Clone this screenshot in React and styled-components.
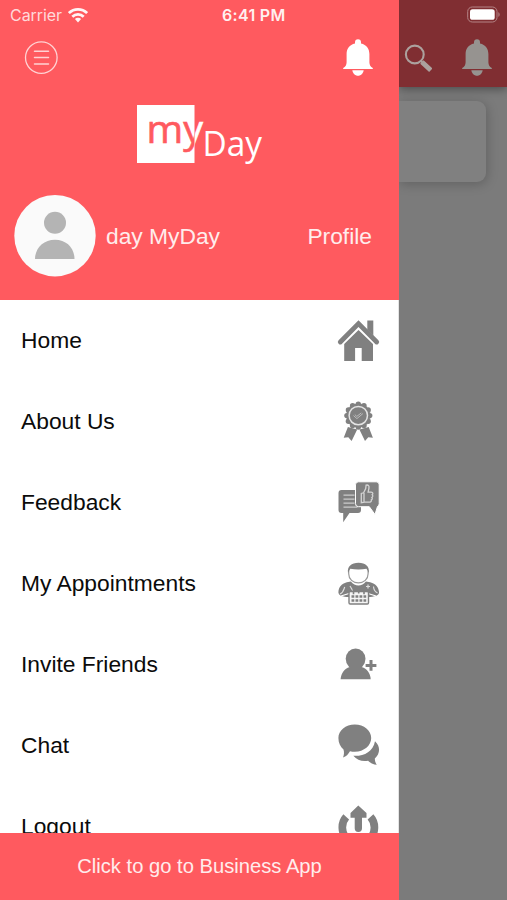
import React from "react";
import styled, { createGlobalStyle } from "styled-components";

const CORAL = "#ff5a5f";
const GREY = "#808080";

const GlobalStyle = createGlobalStyle`
  * { box-sizing: border-box; }
  body { margin: 0; font-family: "Liberation Sans", Arial, sans-serif; }
`;

const Screen = styled.div`
  display: flex;
  width: 507px;
  height: 900px;
  overflow: hidden;
  background: #7b7b7b;
`;

const Drawer = styled.aside`
  display: flex;
  flex-direction: column;
  width: 399px;
  height: 100%;
  background: #fff;
`;

const DrawerHeader = styled.header`
  display: flex;
  flex-direction: column;
  height: 300px;
  background: ${CORAL};
  color: #ffecec;
`;

const StatusBar = styled.div`
  display: grid;
  grid-template-columns: 58px 154px auto;
  align-items: center;
  height: 30px;
  padding-left: 10px;
  font-family: Inter, sans-serif;
  font-size: 16px;
  line-height: 30px;
  color: #ffd9da;
`;

const Carrier = styled.span`
  letter-spacing: -0.05px;
`;

const Time = styled.span`
  font-weight: 600;
  letter-spacing: 0.3px;
  color: #fff0f0;
`;

const Toolbar = styled.div`
  display: flex;
  align-items: center;
  justify-content: space-between;
  height: 56px;
  padding: 0 25px 0 24px;
`;

const LogoArea = styled.div`
  display: flex;
  height: 94px;
  padding: 14px 0 0 132px;
`;

const ProfileRow = styled.div`
  display: flex;
  align-items: center;
  height: 112px;
  padding: 0 27px 0 14px;
  font-size: 22.8px;
`;

const UserName = styled.span`
  flex: 1;
  padding-left: 10px;
`;

const Menu = styled.nav`
  flex: 1;
  min-height: 0;
  overflow: hidden;
  border-right: 1px solid #e4e4e4;
`;

const MenuItem = styled.a`
  display: flex;
  align-items: center;
  justify-content: space-between;
  height: 81px;
  padding: 0 19px 0 21px;
  font-size: 22.8px;
  color: #0b0b0b;
`;

const MenuIcon = styled.svg`
  width: 41px;
  height: 41px;
  overflow: visible;
  fill: ${GREY};
`;

const BusinessButton = styled.button`
  height: 67px;
  padding: 0;
  border: 0;
  background: ${CORAL};
  color: #ffecec;
  font: 20.2px "Liberation Sans", Arial, sans-serif;
`;

const DimmedPage = styled.main`
  flex: 1;
  height: 100%;
  overflow: hidden;
`;

const PageHeader = styled.header`
  display: flex;
  flex-direction: column;
  height: 87px;
  background: #802e32;
  box-shadow: 0 2px 9px rgba(0, 0, 0, 0.4);
`;

const BatterySlot = styled.div`
  display: flex;
  justify-content: flex-end;
  align-items: center;
  height: 30px;
  padding: 0 7px 2px 0;
`;

const PageTools = styled.div`
  display: flex;
  align-items: center;
  justify-content: space-between;
  height: 56px;
  padding: 0 14px 0 5px;
`;

const Card = styled.section`
  width: 87px;
  height: 81px;
  margin-top: 14px;
  border-radius: 0 9px 9px 0;
  background: #808080;
  box-shadow: 1px 2px 12px rgba(0, 0, 0, 0.22);
`;

const Wifi = () => (
  <svg width="20" height="16" viewBox="0 0 20 16" fill="none" stroke="#fff5f5" strokeWidth="2.7">
    <path d="M0.900 6.100a12.900 12.900 0 0 1 18.200 0" />
    <path d="M4.300 9.700a8.100 8.100 0 0 1 11.400 0" />
    <path d="M6.900 12.100a4.400 4.400 0 0 1 6.200 0L10 15.400z" fill="#fff5f5" stroke="none" />
  </svg>
);

const MenuCircle = () => (
  <svg width="34" height="34" viewBox="0 0 34 34" fill="none" stroke="#ffd3d4" strokeWidth="1.3">
    <circle cx="17.300" cy="16.600" r="15.800" />
    <path d="M10.500 10.300h14M10.500 16.600h14M10.500 22.900h14" strokeLinecap="round" strokeWidth="1.500" />
  </svg>
);

const Bell = ({ color }) => (
  <svg width="32" height="38" viewBox="0 0 32 38" fill={color}>
    <path d="M13 3.200a3 3 0 0 1 6 0v1.200c5.500 1.200 8.400 5.100 8.400 10.700v8.200c0 2.500 1.100 4.600 3.400 5.700v.9H1.200v-.9c2.300-1.100 3.400-3.200 3.400-5.700v-8.200C4.600 9.500 7.500 5.600 13 4.400z" />
    <path d="M10.300 31.200h11.400c-.6 3.300-2.900 5.500-5.700 5.500s-5.100-2.200-5.700-5.500z" />
  </svg>
);

const SearchGlyph = () => (
  <svg width="28" height="28" viewBox="0 0 28 28" fill="none" stroke="#aca19e">
    <circle cx="10.800" cy="10.500" r="8.900" strokeWidth="2.100" />
    <path d="M19.600 19.600l5.400 5" strokeWidth="4.800" strokeLinecap="square" strokeLinejoin="round" />
    <path d="M17 17l2 2" strokeWidth="1.800" />
  </svg>
);

const Battery = () => (
  <svg width="33" height="17" viewBox="0 0 33 17">
    <rect x="0.700" y="1" width="29.300" height="15" rx="4.500" fill="none" stroke="#b48385" />
    <rect x="3" y="3.200" width="24.700" height="10.600" rx="2.600" fill="#fff" />
    <path d="M31.400 6.200c1.600.7 1.600 4 0 4.600z" fill="#b48385" />
  </svg>
);

const Logo = () => (
  <svg width="136" height="70" viewBox="132 100 136 70" fontFamily="Open Sans, sans-serif">
    <defs>
      <linearGradient id="split" gradientUnits="userSpaceOnUse" x1="194" y1="0" x2="195" y2="0">
        <stop offset="0" stopColor={CORAL} />
        <stop offset="1" stopColor="#fff" />
      </linearGradient>
    </defs>
    <rect x="137" y="105" width="57.500" height="58" fill="#fff" />
    <text x="146.500" y="142.700" fontSize="38.500" textLength="56.500" lengthAdjust="spacingAndGlyphs" fill="url(#split)" stroke="url(#split)" strokeWidth="0.600">my</text>
    <text x="202.500" y="155.500" fontSize="34" textLength="59.500" lengthAdjust="spacingAndGlyphs" fill="#fff">Day</text>
  </svg>
);

const Avatar = () => (
  <svg width="82" height="82" viewBox="0 0 82 82">
    <circle cx="41" cy="40.700" r="40.700" fill="#fafafa" />
    <g fill="#b4b4b4">
      <circle cx="41" cy="27.700" r="11" />
      <path d="M21 64c0-11 8.500-19.300 20-19.300S60.500 53 60.500 64z" />
    </g>
  </svg>
);

const HomeIcon = () => (
  <MenuIcon viewBox="0 0 41 41">
    <path d="M29.300.4h6v15.400l-6-6z" />
    <path d="M2.300 22L20.500 3.600 38.700 22" fill="none" stroke={GREY} strokeWidth="4.800" strokeLinecap="round" />
    <path d="M6.200 24L20.500 9.900 35 24v17H23.700V28h-6.600v13H6.200z" />
  </MenuIcon>
);

const scallops = Array.from({ length: 12 }, (_, i) => {
  const angle = (i * Math.PI) / 6;
  return [20.3 + 11.4 * Math.sin(angle), 14.6 - 11.4 * Math.cos(angle)];
});

const AwardIcon = () => (
  <MenuIcon viewBox="0 0 41 41">
    <path d="M9.900 26L5.700 36.800l4.600-.5 3.300 3.700 5.600-11.500zM30.700 26l4.200 10.800-4.600-.5L27 40l-5.600-11.500z" />
    <circle cx="20.300" cy="14.600" r="12.600" stroke="#fff" strokeWidth="0.800" />
    {scallops.map(([x, y], i) => <circle key={i} cx={x} cy={y} r="2.700" />)}
    <circle cx="20.300" cy="14.600" r="9.200" fill="none" stroke="#e4e4e4" strokeWidth="1.500" />
    <path d="M15.500 14.600l3.400 3 6-5M16.800 13.600l2 1.800 4.500-3.500" fill="none" stroke="#bbb" strokeWidth="1" />
  </MenuIcon>
);

const FeedbackIcon = () => (
  <MenuIcon viewBox="0 0 41 41">
    <path d="M3.500 8H20a3 3 0 0 1 3 3v17a3 3 0 0 1-3 3h-8.500l-6.300 9.300V31H3.500a3 3 0 0 1-3-3V11a3 3 0 0 1 3-3z" />
    <path d="M5.500 13.200h11M5.500 17.200h11M5.500 21.200h11M5.500 25.200h14" stroke="#ccc" strokeWidth="1.200" />
    <path d="M20.500-.2h17.700a3 3 0 0 1 3 3v18.900a3 3 0 0 1-1.700 2.700L37 32.500l-5.700-7.800H20.500a3 3 0 0 1-3-3V2.800a3 3 0 0 1 3-3z" stroke="#fff" strokeWidth="1" />
    <path d="M23.300 20.700V11.500l2.300-.7 2.100-4.200.4-3.500c2.300-.5 3.300.9 2.800 3.200l-.8 3.900h3.200c1.700 0 2 1.900.9 2.600 1 .8.600 2.200-.3 2.600.8.800.3 2.100-.6 2.500.3 1.100-.3 2.200-1.400 2.200h-5.200zM26 11v8.500" fill="none" stroke="#d4d4d4" strokeWidth="1.300" />
  </MenuIcon>
);

const AppointmentIcon = () => (
  <MenuIcon viewBox="0 0 41 41">
    <path d="M8.800 19.300C3.300 21 .6 24 .4 29.500c.3 3 4 4.500 10.500 4.500h19c6.500 0 11-1.500 11.200-4.500C40.500 24 38 21 32.200 19.300l-4.300-.8c-4 5.200-11 5.200-15 0z" />
    <path d="M10.700 7.500v3.200c0 5.400 4.300 9.200 9.700 9.200s9.700-3.800 9.700-9.200V7.500" fill="#fff" stroke="#999" strokeWidth="1.200" />
    <path d="M10 10C9.100 3.400 13.400-.2 20.500-.2S31.700 3.400 30.800 10L28.500 5.700c-5 .9-11 .9-16.200 0z" />
    <path d="M2 31c3.500-1.500 3.700-4.500 4.700-7M35.500 23.500c.2 3 1.800 5.400 4 6.500M12 23l3.500 6M30 21.500v4M28 23.500h4" fill="none" stroke="#ddd" strokeWidth="1.200" />
    <path d="M3 33l8-2.500M38 33l-8-2.500" stroke="#fff" strokeWidth="1.300" />
    <rect x="11" y="28.500" width="19.500" height="12.500" rx="1.200" fill="#f5f5f5" stroke={GREY} strokeWidth="1.400" />
    <path d="M15.500 26.200v5M20.700 27.500v3M26 26.200v5" stroke={GREY} strokeWidth="1.600" />
    <path d="M13.500 33.500h14.700M13.500 37.500h14.700" stroke={GREY} strokeWidth="2.300" strokeDasharray="2.800 1.200" />
  </MenuIcon>
);

const InviteIcon = () => (
  <MenuIcon viewBox="0 0 41 41">
    <ellipse cx="17.600" cy="14.800" rx="9.900" ry="10.400" />
    <path d="M2.600 35.300c.5-6.400 3.700-10.600 9.100-12.400h12c5.400 1.800 8.600 6 9 12.400z" />
    <path d="M33 15.500v11.800M27.100 21.400h11.800" stroke="#fff" strokeWidth="5" />
    <path d="M33 16v10.800M27.600 21.400h10.800" stroke={GREY} strokeWidth="3" />
  </MenuIcon>
);

const ChatIcon = () => (
  <MenuIcon viewBox="0 0 41 41">
    <path d="M16.800-.5C26-.5 33.200 5.500 33.200 13.100S26 26.800 16.800 26.800c-1.700 0-3.300-.2-4.800-.6-1.700 3-3.800 5.300-7 6.400 1.100-2.500 1.300-5.300.5-8C2.300 22 .4 18 .4 13.100.4 5.500 7.600-.5 16.800-.5z" />
    <path d="M37 16.200c5.600 5.100 5.300 12.600-.2 17.300.1 2.500.7 4.300 2 6.300-4.200-.4-6.700-1.900-8.700-4-6 1-11.100-.6-14.800-5C25.500 31.500 35 27 37 16.200z" />
  </MenuIcon>
);

const LogoutIcon = () => (
  <MenuIcon viewBox="0 0 41 41">
    <path d="M20.300-.5l8.200 7.400v4.900H24v10.500a3.600 3.600 0 0 1-7.300 0V11.800h-4.200V6.900z" />
    <path d="M8.200 10.800C2.500 17.100 3.400 27.600 9 32.500s17.200 4.900 22.800 0 6.400-15.400.7-21.700" fill="none" stroke={GREY} strokeWidth="7.700" />
  </MenuIcon>
);

const items = [
  ["Home", HomeIcon],
  ["About Us", AwardIcon],
  ["Feedback", FeedbackIcon],
  ["My Appointments", AppointmentIcon],
  ["Invite Friends", InviteIcon],
  ["Chat", ChatIcon],
  ["Logout", LogoutIcon],
];

export default function App() {
  return (
    <Screen>
      <GlobalStyle />
      <Drawer>
        <DrawerHeader>
          <StatusBar>
            <Carrier>Carrier</Carrier>
            <Wifi />
            <Time>6:41 PM</Time>
          </StatusBar>
          <Toolbar>
            <MenuCircle />
            <Bell color="#fff" />
          </Toolbar>
          <LogoArea><Logo /></LogoArea>
          <ProfileRow>
            <Avatar />
            <UserName>day MyDay</UserName>
            <span>Profile</span>
          </ProfileRow>
        </DrawerHeader>
        <Menu>
          {items.map(([label, Icon]) => (
            <MenuItem key={label}>
              <span>{label}</span>
              <Icon />
            </MenuItem>
          ))}
        </Menu>
        <BusinessButton>Click to go to Business App</BusinessButton>
      </Drawer>
      <DimmedPage>
        <PageHeader>
          <BatterySlot><Battery /></BatterySlot>
          <PageTools>
            <SearchGlyph />
            <Bell color="#969390" />
          </PageTools>
        </PageHeader>
        <Card />
      </DimmedPage>
    </Screen>
  );
}
